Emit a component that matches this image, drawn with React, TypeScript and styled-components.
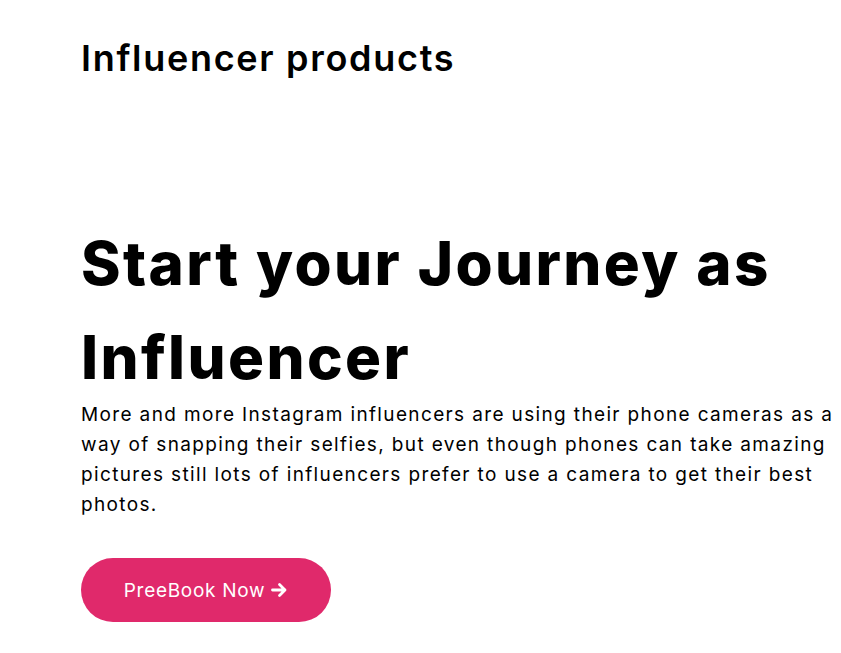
import React from "react";
import styled, { createGlobalStyle } from "styled-components";

const GlobalStyle = createGlobalStyle`
  body {
    margin: 0;
    background: #ffffff;
    font-family: "Inter", "Noto Sans", sans-serif;
    color: #000000;
  }
`;

const Page = styled.div`
  padding: 0 4px 0 81px;
`;

const Title = styled.h2`
  margin: 0;
  padding-top: 36px;
  font-size: 36px;
  line-height: 44px;
  font-weight: 600;
  letter-spacing: 1.7px;
`;

const Hero = styled.section`
  margin-top: 136px;
`;

const Heading = styled.h1`
  margin: 0;
  font-size: 60px;
  line-height: 94px;
  font-weight: 800;
  letter-spacing: 2.4px;
`;

const Lead = styled.p`
  margin: -4px 0 0;
  max-width: 756px;
  font-size: 19px;
  line-height: 30px;
  font-weight: 400;
  letter-spacing: 1.36px;
`;

const CtaButton = styled.button`
  margin-top: 38px;
  width: 250px;
  height: 64px;
  border: none;
  border-radius: 32px;
  background: #e0296b;
  color: #ffffff;
  font-family: inherit;
  font-size: 19px;
  font-weight: 400;
  letter-spacing: 0.7px;
  display: inline-flex;
  align-items: center;
  justify-content: center;
  gap: 5px;
  cursor: pointer;
`;

const Arrow = () => (
  <svg width="18" height="18" viewBox="0 0 18 18" fill="none">
    <path
      d="M2.5 9h12.5M9.5 3.5L15 9l-5.5 5.5"
      stroke="#ffffff"
      strokeWidth="2.8"
      strokeLinecap="round"
      strokeLinejoin="round"
    />
  </svg>
);

export default function App() {
  return (
    <Page>
      <GlobalStyle />
      <Title>Influencer products</Title>
      <Hero>
        <Heading>
          Start your Journey as
          <br />
          Influencer
        </Heading>
        <Lead>
          More and more Instagram influencers are using their phone cameras as a
          way of snapping their selfies, but even though phones can take amazing
          pictures still lots of influencers prefer to use a camera to get their
          best photos.
        </Lead>
        <CtaButton>
          PreeBook Now <Arrow />
        </CtaButton>
      </Hero>
    </Page>
  );
}
